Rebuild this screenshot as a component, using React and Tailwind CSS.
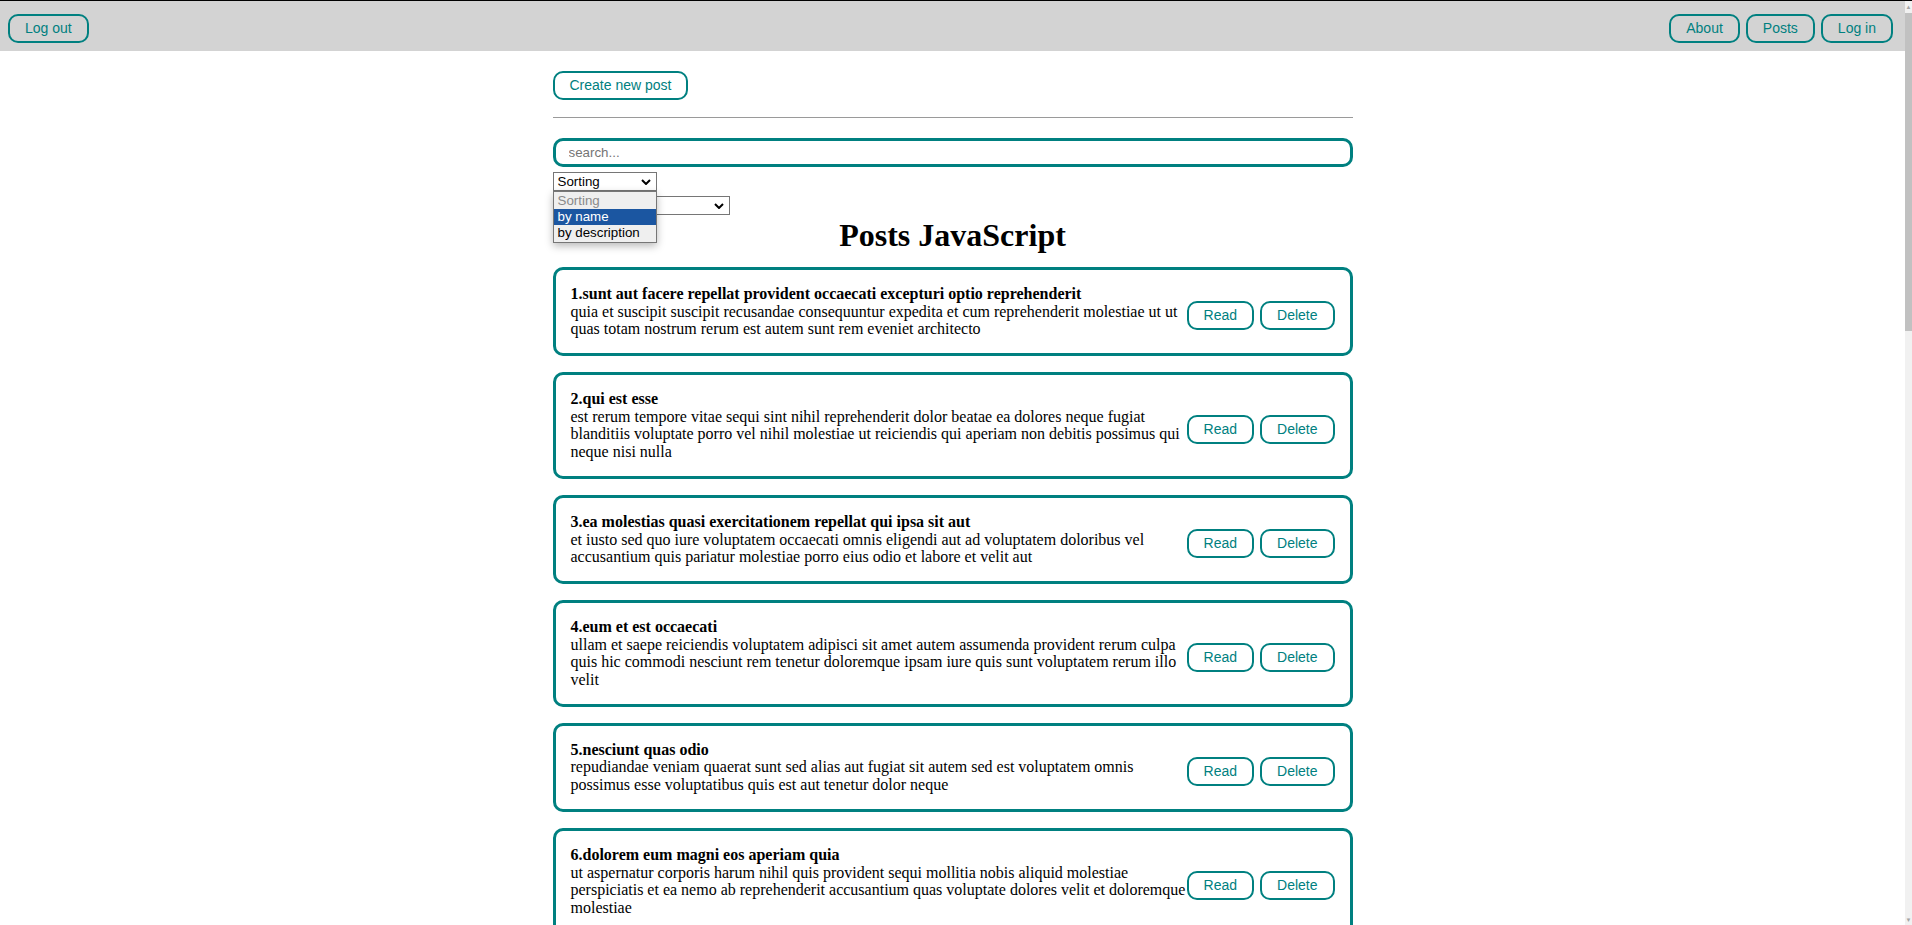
const posts = [
  {
    id: 1,
    title: "sunt aut facere repellat provident occaecati excepturi optio reprehenderit",
    body: "quia et suscipit suscipit recusandae consequuntur expedita et cum reprehenderit molestiae ut ut quas totam nostrum rerum est autem sunt rem eveniet architecto",
  },
  {
    id: 2,
    title: "qui est esse",
    body: "est rerum tempore vitae sequi sint nihil reprehenderit dolor beatae ea dolores neque fugiat blanditiis voluptate porro vel nihil molestiae ut reiciendis qui aperiam non debitis possimus qui neque nisi nulla",
  },
  {
    id: 3,
    title: "ea molestias quasi exercitationem repellat qui ipsa sit aut",
    body: "et iusto sed quo iure voluptatem occaecati omnis eligendi aut ad voluptatem doloribus vel accusantium quis pariatur molestiae porro eius odio et labore et velit aut",
  },
  {
    id: 4,
    title: "eum et est occaecati",
    body: "ullam et saepe reiciendis voluptatem adipisci sit amet autem assumenda provident rerum culpa quis hic commodi nesciunt rem tenetur doloremque ipsam iure quis sunt voluptatem rerum illo velit",
  },
  {
    id: 5,
    title: "nesciunt quas odio",
    body: "repudiandae veniam quaerat sunt sed alias aut fugiat sit autem sed est voluptatem omnis possimus esse voluptatibus quis est aut tenetur dolor neque",
  },
  {
    id: 6,
    title: "dolorem eum magni eos aperiam quia",
    body: "ut aspernatur corporis harum nihil quis provident sequi mollitia nobis aliquid molestiae perspiciatis et ea nemo ab reprehenderit accusantium quas voluptate dolores velit et doloremque molestiae",
  },
  {
    id: 7,
    title: "magnam facilis autem",
    body: "dolore placeat quibusdam ea quo vitae magni quis enim qui quis quo nemo aut saepe quidem repellat excepturi ut quia sunt ut sequi eos ea sed quas",
  },
];

function TealButton({ children }) {
  return (
    <button
      type="button"
      className="shrink-0 rounded-[10px] border-2 border-[#008080] px-[15px] py-[5px] font-['Liberation_Sans',Arial,sans-serif] text-[14px] leading-[15px] text-[#008080]"
    >
      {children}
    </button>
  );
}

function Chevron() {
  return (
    <svg width="10" height="6" viewBox="0 0 10 6" aria-hidden="true" className="shrink-0">
      <path d="M1 1l4 4 4-4" fill="none" stroke="#000" strokeWidth="2" />
    </svg>
  );
}

function FakeSelect({ width, label }) {
  return (
    <div
      className={`flex h-[19px] items-center justify-between border border-[#767676] bg-white pl-[4px] pr-[5px] font-['Liberation_Sans',Arial,sans-serif] text-[13.33px] leading-[15px] text-black ${width}`}
    >
      <span>{label}</span>
      <Chevron />
    </div>
  );
}

function PostCard({ post }) {
  return (
    <article className="flex items-center rounded-[10px] border-[3px] border-[#008080] px-[15px] py-[15px]">
      <div className="min-w-0 flex-1 font-['Liberation_Serif','Times_New_Roman',serif] text-[16px] leading-[17.7px] text-black">
        <strong className="font-bold">
          {post.id}.{post.title}
        </strong>
        <div>{post.body}</div>
      </div>
      <div className="mt-[9px] flex shrink-0 gap-[6px]">
        <TealButton>Read</TealButton>
        <TealButton>Delete</TealButton>
      </div>
    </article>
  );
}

export default function App() {
  return (
    <div className="flex h-[925px] overflow-hidden border-t border-black bg-white">
      <div className="min-w-0 flex-1">
        <nav className="flex h-[50px] items-start justify-between bg-[#d3d3d3] pl-[8px] pr-[12px] pt-[13px]">
          <TealButton>Log out</TealButton>
          <div className="flex gap-[6px]">
            <TealButton>About</TealButton>
            <TealButton>Posts</TealButton>
            <TealButton>Log in</TealButton>
          </div>
        </nav>

        <main className="mx-auto w-[800px] pt-[20px]">
          <TealButton>Create new post</TealButton>
          <hr className="mt-[17px] h-0 border-t border-[#9a9a9a]" />
          <input
            type="text"
            placeholder="search..."
            className="mt-[20px] block h-[29px] w-full rounded-[10px] border-[3px] border-[#008080] px-[13px] font-['Liberation_Sans',Arial,sans-serif] text-[13.33px] text-black outline-none placeholder:text-[#757575]"
          />

          <div className="relative mt-[5px] w-[104px]">
            <FakeSelect width="w-[104px]" label="Sorting" />
            <div className="absolute left-0 top-full z-10 w-[104px] border border-[#767676] bg-[#efefef] py-[1px] font-['Liberation_Sans',Arial,sans-serif] text-[13.33px] leading-[16px] shadow-[0_3px_8px_rgba(0,0,0,0.28)]">
              <div className="px-[4px] text-[#8a8a8a]">Sorting</div>
              <div className="bg-[#1b56a1] px-[4px] text-white">by name</div>
              <div className="px-[4px] text-black">by description</div>
            </div>
          </div>
          <div className="mt-[5px]">
            <FakeSelect width="w-[177px]" label="" />
          </div>

          <h1 className="mb-[13.5px] mt-[3px] text-center font-['Liberation_Serif','Times_New_Roman',serif] text-[32px] font-bold leading-[35.4px] text-black">
            Posts JavaScript
          </h1>

          <div className="flex flex-col gap-[16px]">
            {posts.map((post) => (
              <PostCard key={post.id} post={post} />
            ))}
          </div>
        </main>
      </div>

      <div className="flex w-[7px] shrink-0 flex-col bg-[#f1f1f1]">
        <div className="flex h-[12px] items-center justify-center text-[6px] leading-none text-[#a3a3a3]">▲</div>
        <div className="h-[318px] bg-[#c1c1c1]" />
        <div className="flex-1" />
        <div className="flex h-[10px] items-center justify-center text-[6px] leading-none text-[#a3a3a3]">▼</div>
      </div>
    </div>
  );
}
